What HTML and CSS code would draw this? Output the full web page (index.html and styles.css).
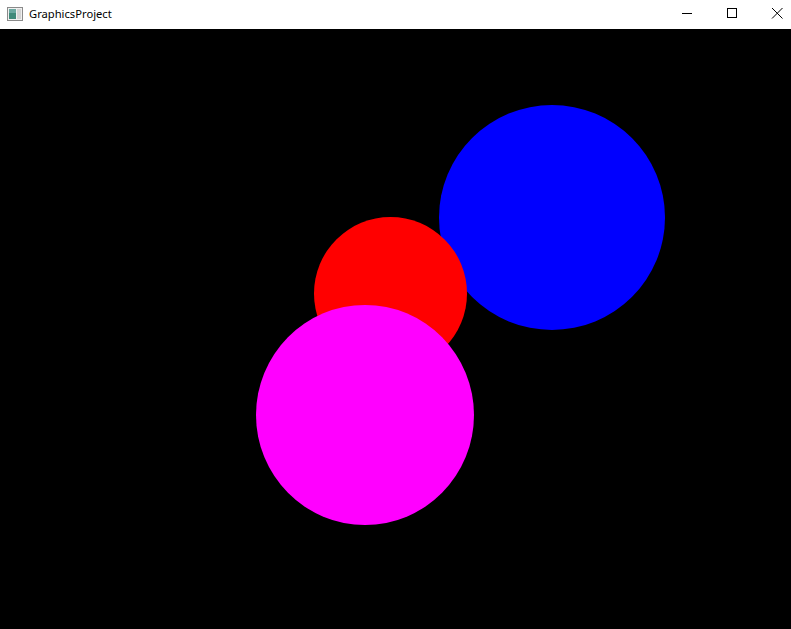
FILE: index.html
```html
<!DOCTYPE html>
<html>
<head>
<meta charset="utf-8">
<link rel="stylesheet" href="styles.css">
</head>
<body>
<div class="window">
  <div class="titlebar">
    <div class="app">
      <svg class="app-icon" width="16" height="14" viewBox="0 0 16 14">
        <rect x="0.5" y="0.5" width="15" height="13" fill="#f0f0f0" stroke="#8a8a8a"/>
        <rect x="2" y="2" width="7" height="10" fill="#3f8a7a"/>
        <rect x="2" y="2" width="7" height="4" fill="#6aa8a0"/>
        <rect x="10" y="2" width="4" height="10" fill="#d4d4d4"/>
      </svg>
      <span class="title">GraphicsProject</span>
    </div>
    <div class="controls">
      <div class="ctl">
        <svg width="12" height="12" viewBox="0 0 12 12"><path d="M1 6.5H11" stroke="#000" stroke-width="1"/></svg>
      </div>
      <div class="ctl">
        <svg width="12" height="12" viewBox="0 0 12 12"><rect x="1.5" y="1.5" width="9" height="9" fill="none" stroke="#000" stroke-width="1"/></svg>
      </div>
      <div class="ctl">
        <svg width="12" height="12" viewBox="0 0 12 12"><path d="M1 1L11.5 11.5M11.5 1L1 11.5" stroke="#000" stroke-width="1"/></svg>
      </div>
    </div>
  </div>
  <div class="canvas">
    <div class="circle blue"></div>
    <div class="circle red"></div>
    <div class="circle magenta"></div>
  </div>
</div>
</body>
</html>
```

FILE: styles.css
```css
html, body {
  margin: 0;
  padding: 0;
  background: #000;
}
.window {
  width: 791px;
  height: 629px;
  display: flex;
  flex-direction: column;
  overflow: hidden;
}
.titlebar {
  height: 29px;
  flex: none;
  background: #fff;
  display: flex;
  justify-content: space-between;
  align-items: center;
}
.app {
  display: flex;
  align-items: center;
  padding-left: 7px;
  gap: 6px;
  height: 100%;
}
.app-icon {
  display: block;
  margin-top: -2px;
}
.title {
  font-family: "Noto Sans", "DejaVu Sans", sans-serif;
  font-size: 11.2px;
  color: #000;
  margin-top: -2px;
}
.controls {
  display: flex;
  height: 100%;
  margin-right: -8px;
}
.ctl {
  width: 45px;
  height: 100%;
  display: flex;
  align-items: center;
  justify-content: center;
}
.ctl svg {
  display: block;
  margin-top: -3px;
}
.canvas {
  position: relative;
  flex: 1;
  background: #000;
}
.circle {
  position: absolute;
  border-radius: 50%;
}
.blue {
  left: 439px;
  top: 76px;
  width: 226px;
  height: 225px;
  background: #0000ff;
}
.red {
  left: 314px;
  top: 188px;
  width: 153px;
  height: 153px;
  background: #ff0000;
}
.magenta {
  left: 256px;
  top: 276px;
  width: 218px;
  height: 220px;
  background: #ff00ff;
}
```
